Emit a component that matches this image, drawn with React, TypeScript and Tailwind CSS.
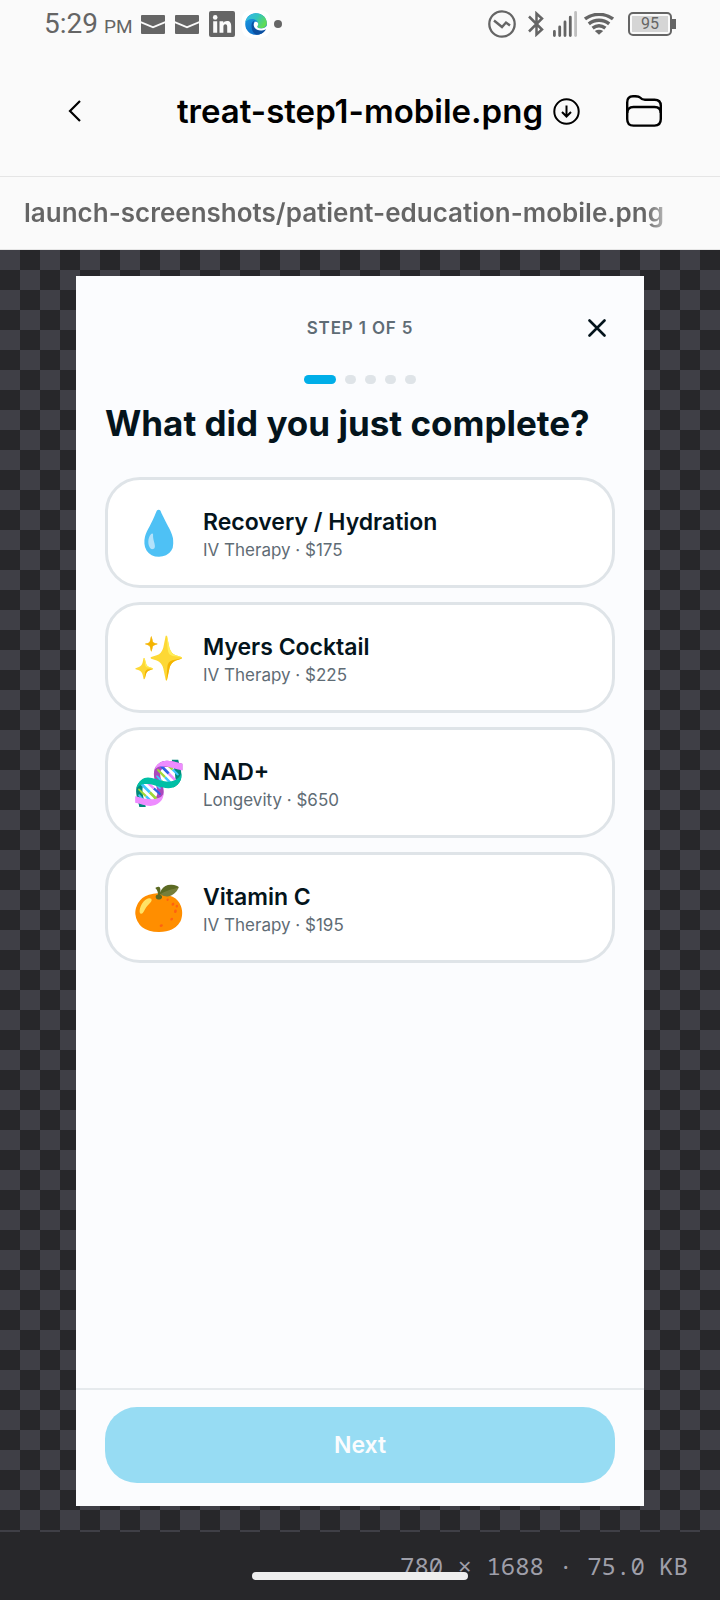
import React from "react";

type Treatment = { emoji: string; name: string; detail: string };

const treatments: Treatment[] = [
  { emoji: "💧", name: "Recovery / Hydration", detail: "IV Therapy · $175" },
  { emoji: "✨", name: "Myers Cocktail", detail: "IV Therapy · $225" },
  { emoji: "🧬", name: "NAD+", detail: "Longevity · $650" },
  { emoji: "🍊", name: "Vitamin C", detail: "IV Therapy · $195" },
];

function MailIcon() {
  return (
    <svg className="h-[19px] w-6" viewBox="0 0 24 19" aria-hidden="true">
      <path d="M1 0h22a1 1 0 0 1 1 1v5.200L12 11.300 0 6.200V1a1 1 0 0 1 1-1Z" fill="#656565" />
      <path d="M0 8.200 12 13.300 24 8.200V18a1 1 0 0 1-1 1H1a1 1 0 0 1-1-1Z" fill="#656565" />
    </svg>
  );
}

function LinkedInIcon() {
  return (
    <svg className="size-[26px]" viewBox="0 0 26 26" aria-hidden="true">
      <rect width="26" height="26" rx="2" fill="#656565" />
      <circle cx="6.200" cy="6.400" r="2.300" fill="#fafafa" />
      <path d="M4.200 10.300h4v11.500h-4zM10.500 10.300h3.800v1.600c.7-1.200 2-1.900 3.700-1.900 3.200 0 4.200 2 4.200 5.200v6.600h-4v-6c0-1.600-.4-2.600-1.800-2.600s-2 1-2 2.600v6h-3.900z" fill="#fafafa" />
    </svg>
  );
}

function EdgeIcon() {
  return (
    <svg className="size-7" viewBox="0 0 28 28" aria-hidden="true">
      <defs>
        <linearGradient id="edge-top" x1="0" y1="0" x2="1" y2="0.500">
          <stop offset="0.100" stopColor="#35b8e8" />
          <stop offset="0.550" stopColor="#33c5bd" />
          <stop offset="1" stopColor="#60dc55" />
        </linearGradient>
        <linearGradient id="edge-left" x1="0" y1="0" x2="0.600" y2="1">
          <stop offset="0" stopColor="#1b9de2" />
          <stop offset="1" stopColor="#0f6cc8" />
        </linearGradient>
      </defs>
      <rect width="28" height="28" rx="9" fill="#fff" />
      <circle cx="14" cy="14" r="10.800" fill="url(#edge-left)" />
      <path d="M3.300 12.400C4.200 7 8.700 3.200 14 3.200c6.200 0 10.800 4.600 10.800 9.600 0 3.600-2.700 5.600-5.600 5.600-2.500 0-4-.9-4-1.700 0-.6 1-1 1-2.800 0-2.700-2.700-5-6.300-5-3 0-5.400 1.500-6.600 3.500Z" fill="url(#edge-top)" />
      <path d="M9.500 15.500c0-2.400 1.400-4.300 3.300-5-1.200 1.300-1.600 3-1.200 4.700.8 3.300 4 5.400 7.500 5.400 1.600 0 3-.5 4-1.200.5-.3.800.1.500.6A10.800 10.800 0 0 1 14.500 24.800c-3-.8-5-5-5-9.300Z" fill="#0c4fa0" />
      <path d="M13 11.500c-1.500 1.800-1.600 4-.6 5.800 1.500 2.500 4.600 3.500 7.400 3.200 1.800-.2 3.300-.9 4.200-1.600l1.500-.9.500-1.600-1.700-.2c-1.300 1.500-3.200 2.200-5.100 2.200-2.500 0-4-.9-4-1.700 0-.6 1-1 1-2.800 0-1-1.200-2.400-3.200-2.400Z" fill="#fff" />
    </svg>
  );
}

function DataSaverIcon() {
  return (
    <svg className="size-7" viewBox="0 0 28 28" fill="none" stroke="#656565" aria-hidden="true">
      <circle cx="14" cy="14" r="12.700" strokeWidth="2.300" />
      <path d="m6 10.500 8 6.500 4-4.500 4 3" strokeWidth="2.400" />
    </svg>
  );
}

function BluetoothIcon() {
  return (
    <svg className="h-[26px] w-4" viewBox="0 0 16 26" fill="none" stroke="#656565" strokeWidth="2.500" aria-hidden="true">
      <path d="m1 5.500 13 13L8.500 23.500V2.500L14 7.500 1 20.500" />
    </svg>
  );
}

function SignalIcon() {
  return (
    <svg className="h-[26px] w-[26px]" viewBox="0 0 26 26" strokeWidth="2.800" strokeLinecap="round" stroke="#656565" aria-hidden="true">
      <path d="M2.400 20.500v4M7.700 16v8.500M13 11v13.500M18.300 6.200v18.300" />
      <path d="M23.600 1.500v23" stroke="#c0c0c0" />
    </svg>
  );
}

function WifiIcon() {
  return (
    <svg className="h-[22px] w-[30px]" viewBox="0 0 30 22" fill="none" stroke="#656565" strokeWidth="3.400" aria-hidden="true">
      <path d="M1 6C9-.2 21-.2 29 6M4.800 10.800c6-4.800 14.400-4.800 20.400 0M8.600 15.200c4-3.200 8.800-3.200 12.800 0" />
      <path d="M10.800 18c2.700-1.800 5.700-1.800 8.400 0L15 21.800Z" fill="#656565" stroke="none" />
    </svg>
  );
}

function StatusBar() {
  return (
    <div className="flex h-12 items-center justify-between pr-11 pl-11 font-[Roboto,sans-serif] text-[#656565]">
      <div className="flex items-center">
        <time className="flex items-baseline gap-1.5 text-[28px] leading-none">
          5:29 <span className="text-[19px]">PM</span>
        </time>
        <div className="ml-2 flex items-center gap-2.5">
          <MailIcon />
          <MailIcon />
          <LinkedInIcon />
        </div>
        <div className="ml-[7px] flex items-center gap-1">
          <EdgeIcon />
          <span className="size-2 rounded-full bg-[#656565]" />
        </div>
      </div>
      <div className="flex items-center">
        <DataSaverIcon />
        <div className="ml-3 flex items-center gap-2">
          <BluetoothIcon />
          <SignalIcon />
        </div>
        <div className="ml-1.5 flex items-center gap-3.5">
          <WifiIcon />
          <div className="flex items-center">
            <div className="flex h-6 w-11 rounded-[5px] border-2 border-[#656565] p-0.5">
              <span className="flex flex-1 items-center justify-center bg-[#d5d5d5] text-base leading-none">95</span>
            </div>
            <span className="h-2.5 w-1 bg-[#656565]" />
          </div>
        </div>
      </div>
    </div>
  );
}

function FileHeader() {
  return (
    <header className="flex h-[129px] items-center justify-between border-b border-[#e5e5e5] pr-[54px] pb-0.5 pl-[55px]">
      <button type="button" aria-label="Back" className="flex size-10 items-center justify-center">
        <svg className="h-6 w-4" viewBox="0 0 16 24" fill="none" stroke="#000" strokeWidth="2.200" aria-hidden="true">
          <path d="M13 2 3 12l10 10" />
        </svg>
      </button>
      <div className="ml-10 flex items-center gap-2.5">
        <h1 className="text-[33px] leading-10 font-semibold text-black">treat-step1-mobile.png</h1>
        <button type="button" aria-label="Download">
          <svg className="size-[27px]" viewBox="0 0 27 27" fill="none" stroke="#000" strokeWidth="2" aria-hidden="true">
            <circle cx="13.500" cy="13.500" r="12.200" />
            <path d="M13.500 7.500v11M9 14l4.500 4.500L18 14" />
          </svg>
        </button>
      </div>
      <button type="button" aria-label="Open folder" className="flex h-10 w-11 items-center justify-center">
        <svg className="h-8 w-9" viewBox="0 0 36 32" fill="none" stroke="#000" strokeWidth="2.400" aria-hidden="true">
          <path d="M1.200 24V7.500C1.200 3 3.500 1.200 7 1.200c4 0 5.600-.3 7 1.300 1.500 1.700 2.500 2.300 5 2.300h9.500c4 0 6.300 2 6.300 6V24c0 4.500-2 6.600-6.300 6.600h-21C3.200 30.600 1.200 28.500 1.200 24Z" />
          <path d="M1.200 18c0-4 2-6 6.300-6h21c4.300 0 6.300 2 6.300 6" />
        </svg>
      </button>
    </header>
  );
}

function TreatmentOption({ emoji, name, detail }: Treatment) {
  return (
    <li>
      <button type="button" className="flex h-[111px] w-full items-center gap-[18px] rounded-[35px] border-3 border-[#dfe4e8] bg-white pl-6 text-left">
        <span aria-hidden="true" className="flex w-[53px] justify-center text-[43px] leading-none">{emoji}</span>
        <span className="flex flex-col pt-1.5">
          <span className="text-[23px] leading-7 font-semibold text-[#04141c]">{name}</span>
          <span className="text-[17px] leading-7 text-[#5f6c75]">{detail}</span>
        </span>
      </button>
    </li>
  );
}

function StepCard() {
  return (
    <section className="flex flex-1 flex-col bg-[#fbfcfe]">
      <div className="flex-1 px-[29px] pt-8">
        <div className="grid grid-cols-[1fr_auto_1fr] items-center">
          <p className="col-start-2 text-[17px] leading-10 font-semibold tracking-wider text-[#5f6c75]">STEP 1 OF 5</p>
          <button type="button" aria-label="Close" className="flex size-9 items-center justify-center justify-self-end">
            <svg className="size-[18px]" viewBox="0 0 18 18" fill="none" stroke="#04141c" strokeWidth="2.600" strokeLinecap="round" aria-hidden="true">
              <path d="m1.500 1.500 15 15M16.500 1.500l-15 15" />
            </svg>
          </button>
        </div>
        <div className="mt-[27px] flex justify-center gap-[9px]">
          <span className="h-[9px] w-8 rounded-full bg-[#00aee8]" />
          <span className="h-[9px] w-[11px] rounded-full bg-[#dfe4e8]" />
          <span className="h-[9px] w-[11px] rounded-full bg-[#dfe4e8]" />
          <span className="h-[9px] w-[11px] rounded-full bg-[#dfe4e8]" />
          <span className="h-[9px] w-[11px] rounded-full bg-[#dfe4e8]" />
        </div>
        <h2 className="mt-[15px] text-[35px] leading-12 font-bold text-[#04141c]">What did you just complete?</h2>
        <ul className="mt-[30px] flex flex-col gap-3.5">
          {treatments.map((t) => (
            <TreatmentOption key={t.name} {...t} />
          ))}
        </ul>
      </div>
      <div className="border-t-2 border-[#e6eaed] px-[29px] pt-[17px] pb-[23px]">
        <button type="button" className="h-[76px] w-full rounded-[32px] bg-[#97dcf3] text-[23px] font-semibold text-[#fbfcfe]">Next</button>
      </div>
    </section>
  );
}

export default function App() {
  return (
    <div className="flex min-h-screen flex-col bg-[#fafafa] font-[Inter,sans-serif]">
      <StatusBar />
      <FileHeader />
      <nav aria-label="File path" className="h-[73px] border-b border-[#e5e5e5] px-6">
        <p className="w-fit bg-linear-to-r from-[#656565] from-97% to-[#b5b5b5] bg-clip-text text-[26px] leading-[72px] font-semibold text-transparent">
          launch-screenshots/patient-education-mobile.png
        </p>
      </nav>
      <main className="flex flex-1 flex-col bg-[repeating-conic-gradient(#27272a_0_25%,#3f3f46_0_50%)] bg-size-[40px_40px] px-[76px] py-[26px]">
        <StepCard />
      </main>
      <footer className="relative flex h-[68px] items-center justify-end bg-[#27272a] px-8">
        <p className="font-['Noto_Sans_Mono','Droid_Sans_Mono','DejaVu_Sans_Mono',monospace] text-2xl text-[#9f9fa9]">780 × 1688 · 75.0 KB</p>
        <span className="absolute bottom-5 left-1/2 h-2 w-[216px] -translate-x-1/2 rounded-full bg-[#eeeeee]" />
      </footer>
    </div>
  );
}
